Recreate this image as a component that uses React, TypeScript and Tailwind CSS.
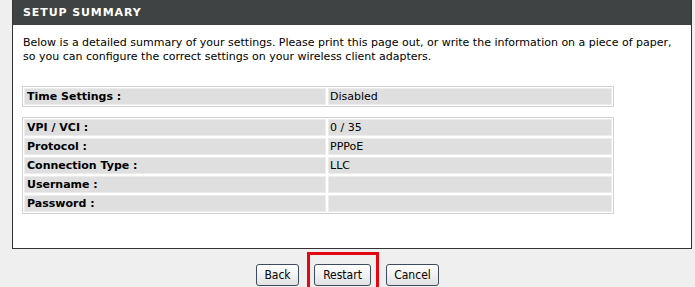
import React from "react";

const font = "font-['DejaVu_Sans','Liberation_Sans',sans-serif]";
const btnFont = "font-['DejaVu_Sans_Condensed','DejaVu_Sans','Liberation_Sans',sans-serif]";

function Row({ label, value }: { label: string; value: string }) {
  return (
    <div className="grid grid-cols-[302px_1fr] gap-[2px]">
      <div className="h-[17px] bg-[#dfdfdf] border border-[#ececec] pl-[2px] text-[11px] leading-[15px] font-bold text-black">
        {label}
      </div>
      <div className="h-[17px] bg-[#dfdfdf] border border-[#ececec] pl-[1px] text-[11px] leading-[15px] text-black">
        {value}
      </div>
    </div>
  );
}

function Btn({ children, w }: { children: React.ReactNode; w: string }) {
  return (
    <button
      className={`${w} h-[22px] rounded-[3px] border border-[#3b4b60] bg-gradient-to-b from-white to-[#e2e2e2] text-[12px] leading-[20px] text-black ${btnFont}`}
    >
      {children}
    </button>
  );
}

export default function App() {
  return (
    <div className={`w-[695px] h-[287px] bg-[#efefef] overflow-hidden ${font}`}>
      <div className="ml-[12px] w-[680px] bg-white border-x border-b border-[#333]">
        <div className="h-[25px] bg-[#404343] pl-[10px] text-white font-bold text-[11px] leading-[25px] tracking-[0.9px]">
          SETUP SUMMARY
        </div>
        <div className="pl-[10px] pt-[11px] text-[11px] leading-[14px] text-black">
          Below is a detailed summary of your settings. Please print this page out, or write the information on a piece of paper,
          <br />
          so you can configure the correct settings on your wireless client adapters.
        </div>
        <div className="ml-[9px] mt-[22px] w-[592px] border border-[#d2d2d2] p-px flex flex-col gap-[2px]">
          <Row label="Time Settings :" value="Disabled" />
        </div>
        <div className="ml-[9px] mt-[10px] w-[592px] border border-[#d2d2d2] p-px flex flex-col gap-[2px]">
          <Row label="VPI / VCI :" value="0 / 35" />
          <Row label="Protocol :" value="PPPoE" />
          <Row label="Connection Type :" value="LLC" />
          <Row label="Username :" value="" />
          <Row label="Password :" value="" />
        </div>
        <div className="h-[34px]" />
      </div>
      <div className="flex justify-center items-start pt-[3px]">
        <div className="mt-[10px] mr-[8px]">
          <Btn w="w-[43px]">Back</Btn>
        </div>
        <div className="border-[3px] border-[#e30613] pt-[7px] pl-[4px] pr-[5px] pb-[8px]">
          <Btn w="w-[57px]">Restart</Btn>
        </div>
        <div className="mt-[10px] ml-[7px]">
          <Btn w="w-[53px]">Cancel</Btn>
        </div>
      </div>
    </div>
  );
}
